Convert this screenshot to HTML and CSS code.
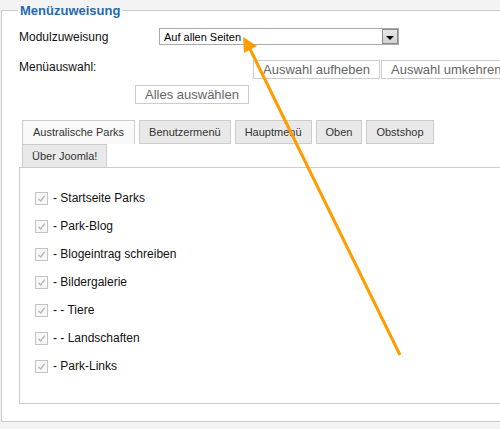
FILE: index.html
```html
<!DOCTYPE html>
<html lang="de">
<head>
<meta charset="utf-8">
<title>Menüzuweisung</title>
<link rel="stylesheet" href="styles.css">
</head>
<body>
<div class="page">
  <fieldset class="box">
    <legend class="box-title">Menüzuweisung</legend>
    <div class="inner">
      <div class="row row-module">
        <label class="lbl lbl-module">Modulzuweisung</label>
        <div class="select">
          <span class="select-text">Auf allen Seiten</span>
          <span class="select-btn"><span class="tri"></span></span>
        </div>
      </div>
      <div class="row row-menu">
        <label class="lbl lbl-menu">Menüauswahl:</label>
        <div class="btns">
          <button class="btn">Auswahl aufheben</button>
          <button class="btn">Auswahl umkehren</button>
        </div>
      </div>
      <div class="row row-all">
        <button class="btn">Alles auswählen</button>
      </div>
      <div class="tabs">
        <div class="tab-row">
          <span class="tab active">Australische Parks</span>
          <span class="tab">Benutzermenü</span>
          <span class="tab">Hauptmenü</span>
          <span class="tab">Oben</span>
          <span class="tab">Obstshop</span>
        </div>
        <div class="tab-row tab-row-2">
          <span class="tab">Über Joomla!</span>
        </div>
      </div>
      <div class="panel">
        <ul class="items">
          <li class="item"><span class="cb"><svg viewBox="0 0 11 11" width="11" height="11"><path d="M2.5 5.8 L4.6 8 L8.8 2.6" fill="none" stroke="#b4b4b4" stroke-width="1.3"/></svg></span>- Startseite Parks</li>
          <li class="item"><span class="cb"><svg viewBox="0 0 11 11" width="11" height="11"><path d="M2.5 5.8 L4.6 8 L8.8 2.6" fill="none" stroke="#b4b4b4" stroke-width="1.3"/></svg></span>- Park-Blog</li>
          <li class="item"><span class="cb"><svg viewBox="0 0 11 11" width="11" height="11"><path d="M2.5 5.8 L4.6 8 L8.8 2.6" fill="none" stroke="#b4b4b4" stroke-width="1.3"/></svg></span>- Blogeintrag schreiben</li>
          <li class="item"><span class="cb"><svg viewBox="0 0 11 11" width="11" height="11"><path d="M2.5 5.8 L4.6 8 L8.8 2.6" fill="none" stroke="#b4b4b4" stroke-width="1.3"/></svg></span>- Bildergalerie</li>
          <li class="item"><span class="cb"><svg viewBox="0 0 11 11" width="11" height="11"><path d="M2.5 5.8 L4.6 8 L8.8 2.6" fill="none" stroke="#b4b4b4" stroke-width="1.3"/></svg></span>- - Tiere</li>
          <li class="item"><span class="cb"><svg viewBox="0 0 11 11" width="11" height="11"><path d="M2.5 5.8 L4.6 8 L8.8 2.6" fill="none" stroke="#b4b4b4" stroke-width="1.3"/></svg></span>- - Landschaften</li>
          <li class="item"><span class="cb"><svg viewBox="0 0 11 11" width="11" height="11"><path d="M2.5 5.8 L4.6 8 L8.8 2.6" fill="none" stroke="#b4b4b4" stroke-width="1.3"/></svg></span>- Park-Links</li>
        </ul>
      </div>
    </div>
  </fieldset>
  <svg class="arrow" viewBox="0 0 500 429" width="500" height="429">
    <line x1="400" y1="355" x2="250" y2="49" stroke="#ff9c00" stroke-width="3"/>
    <polygon points="243,37 257,46 244,53" fill="#ff9c00"/>
  </svg>
</div>
</body>
</html>
```

FILE: styles.css
```css
html, body {
  margin: 0;
  padding: 0;
}
body {
  background: #f3f3f3;
  font-family: "Liberation Sans", Arial, sans-serif;
  color: #111;
  overflow: hidden;
  width: 500px;
  height: 429px;
}
.page {
  position: relative;
  width: 500px;
  height: 429px;
  overflow: hidden;
}
.box {
  margin: 3px 0 0 1px;
  padding: 0;
  border: 1px solid #cccccc;
  background: #ffffff;
  width: 620px;
  box-sizing: border-box;
  min-width: 0;
}
.box-title {
  margin-left: 16px;
  padding: 0 2px;
  font-size: 13px;
  line-height: 15px;
  font-weight: bold;
  color: #2369b0;
}
.inner {
  padding: 0 0 17px 17px;
}
.row {
  display: flex;
}
.row-module {
  margin-top: 10px;
  align-items: center;
  height: 17px;
}
.lbl {
  font-size: 12px;
  line-height: 14px;
  color: #111;
}
.lbl-module {
  width: 140px;
}
.select {
  width: 240px;
  height: 17px;
  box-sizing: border-box;
  border: 1px solid #aaaaaa;
  display: flex;
  align-items: center;
  justify-content: space-between;
  background: #fff;
}
.select-text {
  font-size: 11px;
  padding-left: 4px;
  color: #000;
}
.select-btn {
  width: 16px;
  height: 15px;
  box-sizing: border-box;
  border: 1px solid #8a8a8a;
  background: linear-gradient(#e6e6e6, #d2d2d2);
  display: flex;
  align-items: center;
  justify-content: center;
}
.tri {
  width: 0;
  height: 0;
  border-left: 4px solid transparent;
  border-right: 4px solid transparent;
  border-top: 4px solid #000;
  margin-top: 2px;
}
.row-menu {
  margin-top: 15px;
  align-items: flex-start;
}
.lbl-menu {
  width: 234px;
}
.btns {
  display: flex;
  gap: 1px;
}
.btn {
  font-family: "Liberation Sans", Arial, sans-serif;
  font-size: 13px;
  line-height: 17px;
  height: 19px;
  padding: 0 9px;
  margin: 0;
  border: 1px solid #cccccc;
  background: #ffffff;
  color: #666666;
  white-space: nowrap;
  box-sizing: border-box;
}
.row-all {
  margin-top: 6px;
  padding-left: 116px;
}
.tabs {
  margin-top: 16px;
  padding-left: 3px;
}
.tab-row {
  display: flex;
  gap: 4px;
}
.tab {
  display: block;
  font-size: 11px;
  line-height: 22px;
  height: 24px;
  box-sizing: border-box;
  padding: 0 9px;
  border: 1px solid #cccccc;
  background: #e9e9e9;
  color: #333;
  white-space: nowrap;
}
.tab.active {
  background: #f9f9f9;
  border-bottom: none;
  padding: 0 10px;
}
.tab-row-2 .tab {
  height: 23px;
  border-bottom: none;
}
.panel {
  border: 1px solid #cccccc;
  background: #ffffff;
  padding: 16px 0 23px 15px;
}
.items {
  list-style: none;
  margin: 0;
  padding: 0;
}
.item {
  display: flex;
  align-items: center;
  height: 28px;
  font-size: 12px;
  color: #111;
}
.cb {
  width: 13px;
  height: 13px;
  box-sizing: border-box;
  border: 1px solid #c4c4c4;
  background: #f7f7f7;
  margin-right: 5px;
  display: flex;
  align-items: center;
  justify-content: center;
}
.cb svg {
  display: block;
}
.arrow {
  position: absolute;
  left: 0;
  top: 0;
  pointer-events: none;
}
```
